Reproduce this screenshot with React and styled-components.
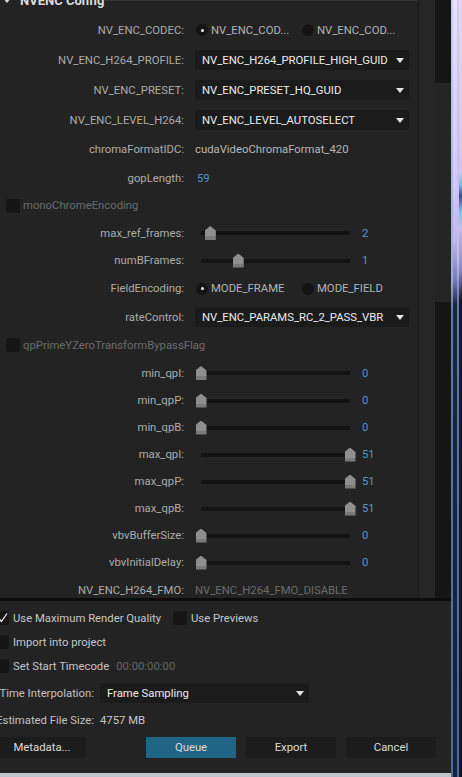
import React from "react";
import styled, { createGlobalStyle } from "styled-components";

const GlobalStyle = createGlobalStyle`
  html, body {
    margin: 0;
    padding: 0;
    background: #232323;
  }
  body {
    font-family: Roboto, "Noto Sans", "Liberation Sans", sans-serif;
    font-size: 11.3px;
  }
  * {
    box-sizing: border-box;
  }
`;

const Screen = styled.div`
  display: flex;
  width: 462px;
  height: 777px;
  overflow: hidden;
  background: #232323;
`;

const Main = styled.div`
  width: 451px;
  display: flex;
  flex-direction: column;
`;

const ConfigPanel = styled.div`
  height: 598px;
  flex: none;
  display: flex;
  overflow: hidden;
`;

const GroupBox = styled.div`
  width: 419px;
  border-right: 1px solid #1a1a1a;
  display: flex;
  flex-direction: column;
`;

const GroupHeader = styled.div`
  flex: none;
  height: 15px;
  display: flex;
`;

const GroupTitle = styled.div`
  width: 105px;
  display: flex;
  align-items: flex-start;
  gap: 9px;
  padding-left: 3px;
  margin-top: -6px;
  font-weight: 700;
  font-size: 13px;
  line-height: 13px;
  color: #dcdcdc;
  white-space: nowrap;
`;

const Caret = styled.span`
  width: 0;
  height: 0;
  margin-top: 4px;
  border-left: 4px solid transparent;
  border-right: 4px solid transparent;
  border-top: 5px solid #dddddd;
`;

const GroupLine = styled.div`
  flex: 1;
  border-top: 1px solid #363636;
`;

const Gutter = styled.div`
  width: 16px;
  background: #262626;
`;

const Scrollbar = styled.div`
  width: 16px;
  background: #151515;
  padding-top: 83px;
`;

const ScrollThumb = styled.div`
  height: 219px;
  background: #252525;
`;

const Row = styled.div`
  flex: none;
  height: ${(p) => p.$h}px;
  display: grid;
  grid-template-columns: 184px 1fr;
  column-gap: 11px;
  align-items: center;
  white-space: nowrap;
`;

const Label = styled.div`
  text-align: right;
  color: #acacac;
`;

const Plain = styled.div`
  color: ${(p) => (p.$dim ? "#6c6c6c" : "#b8b8b8")};
`;

const Number = styled.span`
  color: #4a9ad4;
  padding-left: 2px;
`;

const CheckRow = styled.div`
  flex: none;
  height: ${(p) => p.$h}px;
  display: flex;
  align-items: center;
  gap: 3px;
  padding-left: 6px;
  color: #6c6c6c;
  white-space: nowrap;
`;

const Box = styled.span`
  flex: none;
  width: 14px;
  height: 14px;
  border-radius: 2px;
  background: #161616;
  margin-left: ${(p) => p.$ml || 0}px;
  display: flex;
  align-items: center;
  justify-content: flex-end;
`;

const RadioGroup = styled.div`
  display: flex;
  margin-left: 1px;
`;

const RadioOption = styled.div`
  width: 106px;
  display: flex;
  align-items: center;
  gap: 3px;
  color: #b4b4b4;
`;

const RadioDot = styled.span`
  flex: none;
  width: 12px;
  height: 12px;
  border-radius: 50%;
  background: #141414;
  display: flex;
  align-items: center;
  justify-content: center;
  &::after {
    content: "";
    width: 3px;
    height: 3px;
    border-radius: 50%;
    background: ${(p) => (p.$on ? "#f0f0f0" : "transparent")};
  }
`;

const Select = styled.div`
  width: ${(p) => p.$w}px;
  height: 20px;
  border-radius: 2px;
  background: #1b1b1b;
  display: flex;
  align-items: center;
  justify-content: space-between;
  padding: 0 5px 0 7px;
  color: #ececec;
  white-space: nowrap;
`;

const Arrow = styled.span`
  flex: none;
  width: 0;
  height: 0;
  border-left: 4px solid transparent;
  border-right: 4px solid transparent;
  border-top: 5px solid #e2e2e2;
`;

const SliderBox = styled.div`
  display: flex;
  align-items: center;
`;

const TrackWrap = styled.div`
  position: relative;
  width: 161px;
  height: 20px;
`;

const Track = styled.div`
  position: absolute;
  left: 6px;
  top: 8px;
  width: 149px;
  height: 4px;
  background: #141414;
`;

const Thumb = styled.div`
  position: absolute;
  top: 3px;
  width: 11px;
  height: 14px;
  clip-path: polygon(50% 0, 100% 32%, 100% 100%, 0 100%, 0 32%);
  background: linear-gradient(#8f8f8f 0 72%, #7b7b7b 72%);
`;

const SliderValue = styled.span`
  color: #4a9ad4;
  margin-left: 6px;
`;

const Separator = styled.div`
  flex: none;
  height: 3px;
  background: #0b0b0b;
`;

const BottomPanel = styled.div`
  flex: none;
  height: 172px;
  padding: 5px 15px 0 0;
  overflow: hidden;
  display: flex;
  flex-direction: column;
  color: #c6c6c6;
  white-space: nowrap;
`;

const OptRow = styled.div`
  flex: none;
  height: ${(p) => p.$h}px;
  display: flex;
  align-items: center;
`;

const CheckItem = styled.div`
  width: ${(p) => (p.$w ? `${p.$w}px` : "auto")};
  display: flex;
  align-items: center;
  gap: 4px;
`;

const Timecode = styled.span`
  color: #676767;
  margin-left: 7px;
`;

const FieldRow = styled.div`
  flex: none;
  height: ${(p) => p.$h}px;
  margin-left: -6px;
  display: grid;
  grid-template-columns: 100px auto;
  column-gap: 6px;
  align-items: center;
  justify-content: start;
`;

const FieldLabel = styled.div`
  text-align: right;
  color: #c2c2c2;
`;

const ButtonRow = styled.div`
  flex: none;
  margin-top: 5px;
  margin-left: -2px;
  display: flex;
  justify-content: space-between;
`;

const ButtonGroup = styled.div`
  display: flex;
  gap: 10px;
`;

const Button = styled.div`
  width: ${(p) => p.$w}px;
  height: 21px;
  display: flex;
  align-items: center;
  justify-content: center;
  background: ${(p) => (p.$primary ? "#1f6686" : "#1c1c1c")};
  color: #dcdcdc;
`;

const BottomStrip = styled.div`
  flex: none;
  height: 4px;
  background: #c0c4cd;
`;

const Frame = styled.div`
  width: 11px;
  display: flex;
`;

const FrameEdge = styled.div`
  width: 2px;
  background: linear-gradient(#c4cff2 0, #98aadc 280px, #5d79ad 310px, #4c6a9c 100%);
`;

const FrameGlass = styled.div`
  width: 4px;
  background: linear-gradient(
    #e8e0f6 0,
    #d6ccf2 170px,
    #c2b8ec 240px,
    #7a78c0 280px,
    #1c2440 305px,
    #18203a 100%
  );
`;

const FrameLine = styled.div`
  width: 2px;
  background: linear-gradient(#d2c8f2 0, #c4baee 260px, #5a7ab0 305px, #4a6aa0 100%);
`;

const FrameOuter = styled.div`
  width: 3px;
  background: linear-gradient(
    #e2d8f6 0,
    #cfc4f0 172px,
    #58cbe8 184px,
    #3a4a94 196px,
    #5ccfee 212px,
    #c4bcee 228px,
    #8a86c8 270px,
    #141a2c 300px,
    #10162a 100%
  );
`;

function CheckMark() {
  return (
    <svg width="10" height="10" viewBox="0 0 10 10" style={{ marginRight: 1 }}>
      <polyline points="1,5.5 3.5,8.5 9,0.5" fill="none" stroke="#f2f2f2" strokeWidth="1.3" />
    </svg>
  );
}

function Slider({ value, max }) {
  const left = 6 + (value / max) * 149 - 5.5;
  return (
    <SliderBox>
      <TrackWrap>
        <Track />
        <Thumb style={{ left }} />
      </TrackWrap>
      <SliderValue>{value}</SliderValue>
    </SliderBox>
  );
}

function Radios({ options, selected }) {
  return (
    <RadioGroup>
      {options.map((o, i) => (
        <RadioOption key={o}>
          <RadioDot $on={i === selected} />
          {o}
        </RadioOption>
      ))}
    </RadioGroup>
  );
}

const rows = [
  { h: 30, label: "NV_ENC_CODEC:", radios: ["NV_ENC_COD...", "NV_ENC_COD..."] },
  { h: 30, label: "NV_ENC_H264_PROFILE:", select: "NV_ENC_H264_PROFILE_HIGH_GUID" },
  { h: 30, label: "NV_ENC_PRESET:", select: "NV_ENC_PRESET_HQ_GUID" },
  { h: 30, label: "NV_ENC_LEVEL_H264:", select: "NV_ENC_LEVEL_AUTOSELECT" },
  { h: 29, label: "chromaFormatIDC:", text: "cudaVideoChromaFormat_420" },
  { h: 28, label: "gopLength:", number: 59 },
  { h: 27, check: "monoChromeEncoding" },
  { h: 28, label: "max_ref_frames:", slider: [2, 32] },
  { h: 27, label: "numBFrames:", slider: [1, 4] },
  { h: 29, label: "FieldEncoding:", radios: ["MODE_FRAME", "MODE_FIELD"] },
  { h: 28, label: "rateControl:", select: "NV_ENC_PARAMS_RC_2_PASS_VBR" },
  { h: 28, check: "qpPrimeYZeroTransformBypassFlag" },
  { h: 28, label: "min_qpI:", slider: [0, 51] },
  { h: 27, label: "min_qpP:", slider: [0, 51] },
  { h: 27, label: "min_qpB:", slider: [0, 51] },
  { h: 27, label: "max_qpI:", slider: [51, 51] },
  { h: 27, label: "max_qpP:", slider: [51, 51] },
  { h: 27, label: "max_qpB:", slider: [51, 51] },
  { h: 27, label: "vbvBufferSize:", slider: [0, 51] },
  { h: 27, label: "vbvInitialDelay:", slider: [0, 51] },
  { h: 28, label: "NV_ENC_H264_FMO:", text: "NV_ENC_H264_FMO_DISABLE", dim: true },
];

function ConfigRow({ row }) {
  if (row.check) {
    return (
      <CheckRow $h={row.h}>
        <Box />
        {row.check}
      </CheckRow>
    );
  }
  let value = null;
  if (row.radios) value = <Radios options={row.radios} selected={0} />;
  if (row.select)
    value = (
      <Select $w={214}>
        {row.select}
        <Arrow />
      </Select>
    );
  if (row.text) value = <Plain $dim={row.dim}>{row.text}</Plain>;
  if (row.number !== undefined) value = <Number>{row.number}</Number>;
  if (row.slider) value = <Slider value={row.slider[0]} max={row.slider[1]} />;
  return (
    <Row $h={row.h}>
      <Label>{row.label}</Label>
      {value}
    </Row>
  );
}

export default function App() {
  return (
    <>
      <GlobalStyle />
      <Screen>
        <Main>
          <ConfigPanel>
            <GroupBox>
              <GroupHeader>
                <GroupTitle>
                  <Caret />
                  NVENC Config
                </GroupTitle>
                <GroupLine />
              </GroupHeader>
              {rows.map((r, i) => (
                <ConfigRow key={i} row={r} />
              ))}
            </GroupBox>
            <Gutter />
            <Scrollbar>
              <ScrollThumb />
            </Scrollbar>
          </ConfigPanel>
          <Separator />
          <BottomPanel>
            <OptRow $h={24}>
              <CheckItem $w={173}>
                <Box $ml={-5}>
                  <CheckMark />
                </Box>
                Use Maximum Render Quality
              </CheckItem>
              <CheckItem>
                <Box />
                Use Previews
              </CheckItem>
            </OptRow>
            <OptRow $h={24}>
              <CheckItem>
                <Box $ml={-5} />
                Import into project
              </CheckItem>
            </OptRow>
            <OptRow $h={24}>
              <CheckItem>
                <Box $ml={-5} />
                Set Start Timecode
              </CheckItem>
              <Timecode>00:00:00:00</Timecode>
            </OptRow>
            <FieldRow $h={30}>
              <FieldLabel>Time Interpolation:</FieldLabel>
              <Select $w={209}>
                Frame Sampling
                <Arrow />
              </Select>
            </FieldRow>
            <FieldRow $h={24}>
              <FieldLabel>Estimated File Size:</FieldLabel>
              <span>4757 MB</span>
            </FieldRow>
            <ButtonRow>
              <Button $w={88}>Metadata...</Button>
              <ButtonGroup>
                <Button $w={90} $primary>
                  Queue
                </Button>
                <Button $w={90}>Export</Button>
                <Button $w={90}>Cancel</Button>
              </ButtonGroup>
            </ButtonRow>
          </BottomPanel>
          <BottomStrip />
        </Main>
        <Frame>
          <FrameEdge />
          <FrameGlass />
          <FrameLine />
          <FrameOuter />
        </Frame>
      </Screen>
    </>
  );
}
